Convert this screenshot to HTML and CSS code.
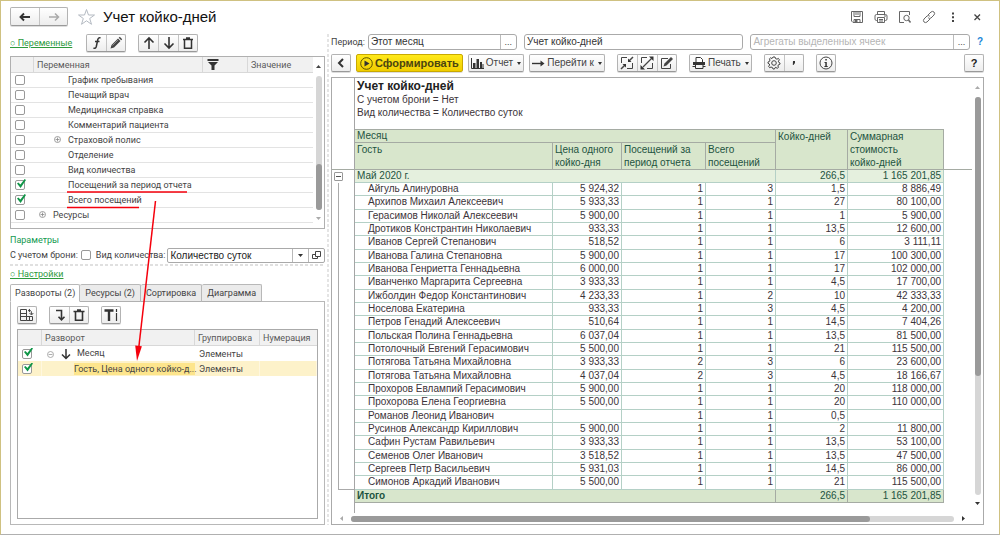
FILE: index.html
```html
<!DOCTYPE html>
<html lang="ru">
<head>
<meta charset="utf-8">
<title>Учет койко-дней</title>
<link rel="stylesheet" href="styles.css">
</head>
<body>
<div class="window">
<header class="titlebar">
  <div class="group nav">
    <button type="button" aria-label="Назад"><svg width="12" height="10" viewBox="0 0 12 10"><path d="M11 5H2M5 1.500L1.500 5L5 8.500" fill="none" stroke="#333" stroke-width="1.900"/></svg></button>
    <button type="button" aria-label="Вперед"><svg width="12" height="10" viewBox="0 0 12 10"><path d="M1 5H10M7 1.500L10.500 5L7 8.500" fill="none" stroke="#aaa" stroke-width="1.500"/></svg></button>
  </div>
  <svg class="star" width="19" height="18" viewBox="0 0 19 18"><path d="M9.500 1.500L11.500 7H17.500L12.700 10.500L14.500 16.300L9.500 12.800L4.500 16.300L6.300 10.500L1.500 7H7.500Z" fill="#fff" stroke="#b4bac2"/></svg>
  <h1>Учет койко-дней</h1>
  <div class="wintools">
    <button type="button" aria-label="Сохранить"><svg width="14" height="14" viewBox="0 0 14 14" fill="none" stroke="#666"><path d="M1.500 1.500H12.500V12.500H3L1.500 11ZM4 1.500V6.500H10V1.500M6 2V5M8 2V5M4 12.500V9.500H10V12.500"/><path d="M5 11H7.500" stroke-width="2"/></svg></button>
    <button type="button" aria-label="Печать"><svg width="14" height="14" viewBox="0 0 14 14" fill="none" stroke="#666"><path d="M3.500 4V1.500H10.500V4M3.500 10.500H2.500Q1 10.500 1 9V6Q1 4.500 2.500 4.500H11.500Q13 4.500 13 6V9Q13 10.500 11.500 10.500H10.500M3.500 7.500H10.500V12.500H3.500ZM5 9.500H9M5 11H9M10 6H12"/></svg></button>
    <button type="button" aria-label="Просмотр"><svg width="14" height="14" viewBox="0 0 14 14" fill="none" stroke="#666"><path d="M6 12.500H1.500V1.500H11.500V5"/><circle cx="8.500" cy="8" r="2.700"/><path d="M10.500 10L12.500 12.500" stroke-width="1.500"/></svg></button>
    <button type="button" aria-label="Ссылка"><svg width="14" height="14" viewBox="0 0 14 14" fill="none" stroke="#666"><path d="M6 5L9 2Q10.500 .800 12 2Q13.300 3.500 12 5L9 8Q7.500 9 6.200 7.800M8 9L5 12Q3.500 13.200 2 12Q.800 10.500 2 9L5 6Q6.500 5 7.800 6.200"/></svg></button>
    <button type="button" aria-label="Еще"><svg width="14" height="14" viewBox="0 0 14 14" fill="#444"><path d="M6 2.500H8V4.500H6ZM6 6.200H8V8.200H6ZM6 10H8V12H6Z"/></svg></button>
    <button type="button" aria-label="Закрыть"><svg width="14" height="14" viewBox="0 0 14 14"><path d="M4.500 4.500L10 10M10 4.500L4.500 10" stroke="#444" stroke-width="1.300"/></svg></button>
  </div>
</header>
<div class="panes">
<aside class="left">
  <div class="varbar">
    <a class="section" href="#vars">○ Переменные</a>
    <div class="group">
      <button type="button" aria-label="Формула"><svg width="14" height="14" viewBox="0 0 14 14" fill="none" stroke="#333" stroke-width="1.500"><path d="M10.500 2Q8.300 1 7.700 4L6.300 10.500Q5.700 13 3.500 12M5 5.500H9.500"/></svg></button>
      <button type="button" aria-label="Изменить"><svg width="14" height="14" viewBox="0 0 14 14"><path d="M1.500 12.500L2.500 9L9 2.500L11.500 5L5 11.500Z M9.700 1.800L10.800 .800L13.200 3.200L12.200 4.300Z" fill="#444"/><path d="M3.500 9.500L9 4" stroke="#aaa" stroke-width=".7"/></svg></button>
    </div>
    <div class="group">
      <button type="button" aria-label="Вверх"><svg width="14" height="14" viewBox="0 0 14 14" fill="none" stroke="#333" stroke-width="1.600"><path d="M7 13V2M2.500 6.500L7 2L11.500 6.500"/></svg></button>
      <button type="button" aria-label="Вниз"><svg width="14" height="14" viewBox="0 0 14 14" fill="none" stroke="#333" stroke-width="1.600"><path d="M7 1V12M2.500 7.500L7 12L11.500 7.500"/></svg></button>
      <button type="button" aria-label="Удалить"><svg width="14" height="14" viewBox="0 0 14 14" fill="none" stroke="#333" stroke-width="1.500"><path d="M2 3.500H12M5 2H9M3.500 4V12.200H10.500V4"/></svg></button>
    </div>
  </div>
  <div class="varlist" id="vars">
    <table class="tree">
      <colgroup><col class="c-check"><col><col class="c-filter"><col class="c-value"></colgroup>
      <thead><tr><th></th><th>Переменная</th><th><svg class="funnel" width="12" height="11" viewBox="0 0 12 11"><path d="M.500 0H11.500V2H.500ZM1 3H11L7.500 6.500V11H4.500V6.500Z" fill="#333"/></svg></th><th>Значение</th></tr></thead>
      <tbody>
      <tr><td><input type="checkbox" id="v1"></td><td class="deep" colspan="3"><label for="v1">График пребывания</label></td></tr>
      <tr><td><input type="checkbox" id="v2"></td><td class="deep" colspan="3"><label for="v2">Печащий врач</label></td></tr>
      <tr><td><input type="checkbox" id="v3"></td><td class="deep" colspan="3"><label for="v3">Медицинская справка</label></td></tr>
      <tr><td><input type="checkbox" id="v4"></td><td class="deep" colspan="3"><label for="v4">Комментарий пациента</label></td></tr>
      <tr><td><input type="checkbox" id="v5"></td><td class="branch2" colspan="3"><svg width="7" height="7" viewBox="0 0 7 7" fill="none" stroke="#888" stroke-width=".8"><circle cx="3.500" cy="3.500" r="3"/><path d="M1.500 3.500H5.500M3.500 1.500V5.500"/></svg><label for="v5">Страховой полис</label></td></tr>
      <tr><td><input type="checkbox" id="v6"></td><td class="deep" colspan="3"><label for="v6">Отделение</label></td></tr>
      <tr><td><input type="checkbox" id="v7"></td><td class="deep" colspan="3"><label for="v7">Вид количества</label></td></tr>
      <tr><td><input type="checkbox" id="v8" checked></td><td class="deep" colspan="3"><label for="v8">Посещений за период отчета</label></td></tr>
      <tr><td><input type="checkbox" id="v9" checked></td><td class="deep" colspan="3"><label for="v9">Всего посещений</label></td></tr>
      <tr><td><input type="checkbox" id="v10"></td><td class="branch1" colspan="3"><svg width="7" height="7" viewBox="0 0 7 7" fill="none" stroke="#888" stroke-width=".8"><circle cx="3.500" cy="3.500" r="3"/><path d="M1.500 3.500H5.500M3.500 1.500V5.500"/></svg><label for="v10">Ресурсы</label></td></tr>
      </tbody>
    </table>
    <div class="vscroll">
      <svg class="up" width="5" height="3" viewBox="0 0 5 3"><path d="M0 3L2.500 0L5 3Z" fill="#444"/></svg>
      <div class="track"><div class="thumb"></div></div>
      <svg width="5" height="3" viewBox="0 0 5 3"><path d="M0 0L2.500 3L5 0Z" fill="#aaa"/></svg>
    </div>
  </div>
  <h2>Параметры</h2>
  <div class="params">
    <label for="bron">С учетом брони:</label><input type="checkbox" id="bron">
    <label class="kindlabel" for="kind">Вид количества:</label>
    <div class="combo">
      <select id="kind"><option>Количество суток</option></select>
      <span class="drop"><svg width="5" height="3" viewBox="0 0 5 3"><path d="M0 0L2.500 3L5 0Z" fill="#333"/></svg></span>
      <button type="button" aria-label="Открыть"><svg width="9" height="9" viewBox="0 0 9 9" fill="none" stroke="#444"><path d="M3.500 .500H8.500V5.500H3.500ZM3 3.500H.500V7.500H5.500V6"/></svg></button>
    </div>
  </div>
  <div class="dash"></div>
  <a class="section settings" href="#setup">○ Настройки</a>
  <div class="tabs" role="tablist">
    <button type="button" role="tab" class="tab on">Развороты (2)</button><button type="button" role="tab" class="tab">Ресурсы (2)</button><button type="button" role="tab" class="tab">Сортировка</button><button type="button" role="tab" class="tab">Диаграмма</button>
  </div>
  <div class="tabpanel" id="setup">
    <div class="setbar">
      <div class="group"><button type="button" aria-label="Таблица"><svg width="14" height="14" viewBox="0 0 14 14" fill="none" stroke="#444"><path d="M.500 1.500H6.500V12.500H.500ZM.500 5.500H6.500M.500 8.500H12.500V12.500H6.500M9.500 8.500V12.500M8.500 2.500H10.500Q11.500 2.500 11.500 6.500M9.500 5L11.500 7L13.300 5M10 1L8.300 2.500L10 4"/></svg></button></div>
      <div class="group"><button type="button" aria-label="Вложить"><svg width="14" height="14" viewBox="0 0 14 14" fill="none" stroke="#333" stroke-width="1.600"><path d="M3 2.500H8.500V11.500M5.500 8.800L8.500 11.800L11.500 8.800"/></svg></button><button type="button" aria-label="Удалить"><svg width="14" height="14" viewBox="0 0 14 14" fill="none" stroke="#333" stroke-width="1.600"><path d="M1.500 3.500H12.500M5 2H9M3.500 4V12.200H10.500V4"/></svg></button></div>
      <div class="group"><button type="button" aria-label="Заголовок"><svg width="14" height="14" viewBox="0 0 14 14" fill="none" stroke="#333"><path d="M.500 2.500H9.500M5 2.500V13" stroke-width="2.400"/><path d="M12.500 1V4M12.500 5V13" stroke-width="1.200"/></svg></button></div>
    </div>
    <div class="setlist">
    <table class="tree">
      <colgroup><col class="c-check"><col><col class="c-kind"><col class="c-num"></colgroup>
      <thead><tr><th></th><th>Разворот</th><th>Группировка</th><th>Нумерация</th></tr></thead>
      <tbody>
      <tr><td><input type="checkbox" checked aria-label="Месяц"></td><td class="month"><svg class="ring" width="7" height="7" viewBox="0 0 7 7" fill="none" stroke="#999" stroke-width=".8"><circle cx="3.500" cy="3.500" r="3"/><path d="M1.500 3.500H5.500"/></svg><svg class="down" width="10" height="11" viewBox="0 0 10 11" fill="none" stroke="#333" stroke-width="1.500"><path d="M5 0V9.500M1 5.500L5 9.500L9 5.500"/></svg>Месяц</td><td>Элементы</td><td></td></tr>
      <tr class="picked"><td><input type="checkbox" checked aria-label="Гость"></td><td class="guest"><div>Гость, Цена одного койко-д...</div></td><td>Элементы</td><td></td></tr>
      </tbody>
    </table>
    </div>
  </div>
</aside>
<div class="splitter"></div>
<main class="right">
  <div class="fields">
    <label for="period">Период:</label>
    <div class="field period"><input id="period" type="text" value="Этот месяц"><button type="button">...</button></div>
    <div class="field"><input type="text" value="Учет койко-дней" aria-label="Вариант отчета"></div>
    <div class="field"><input type="text" placeholder="Агрегаты выделенных ячеек" aria-label="Агрегаты"><button type="button">...</button></div>
    <a class="hint" href="#help">?</a>
  </div>
  <div class="toolbar">
    <div class="group"><button type="button" aria-label="Свернуть"><svg width="8" height="10" viewBox="0 0 8 10"><path d="M6 1L2 5L6 9" fill="none" stroke="#333" stroke-width="2"/></svg></button></div>
    <button type="button" class="run"><svg width="13" height="13" viewBox="0 0 13 13"><circle cx="6.500" cy="6.500" r="5.800" fill="none" stroke="#5b5000"/><path d="M4.500 3.500L9.500 6.500L4.500 9.500Z" fill="#333"/></svg>Сформировать</button>
    <button type="button" class="btn report-btn"><svg width="13" height="11" viewBox="0 0 13 11"><path d="M.500 0V10.500H13" stroke="#333" fill="none"/><path d="M2 5H4.500V10H2ZM5.500 1H8V10H5.500ZM9 4H11V10H9ZM11.500 6H12.500V10H11.500Z" fill="#333"/></svg>Отчет<i class="caret"></i></button>
    <button type="button" class="btn goto"><svg width="13" height="7" viewBox="0 0 13 7"><path d="M0 3.500H10" stroke="#333" stroke-width="1.400"/><path d="M8.500 .500L12.500 3.500L8.500 6.500Z" fill="#333"/></svg>Перейти к<i class="caret"></i></button>
    <div class="group sizes">
      <button type="button" aria-label="Свернуть группы"><svg width="14" height="14" viewBox="0 0 14 14" fill="none" stroke="#444"><path d="M7 1.500H1.500V7M12.500 7V12.500H7"/><path d="M13 1L9 5M1 13L5 9" stroke-width="1.500"/><path d="M8 2.500V6H11.500ZM6 11.500V8H2.500Z" fill="#333" stroke="none"/></svg></button>
      <button type="button" aria-label="Развернуть группы"><svg width="14" height="14" viewBox="0 0 14 14" fill="none" stroke="#444"><path d="M7 1.500H1.500V7M12.500 7V12.500H7"/><path d="M3 11L11.500 2.500" stroke-width="1.300"/><path d="M9 .500H13.500V5ZM.500 9V13.500H5Z" fill="#333" stroke="none"/></svg></button>
      <button type="button" aria-label="Править"><svg width="14" height="14" viewBox="0 0 14 14" fill="none" stroke="#444"><path d="M8 2.500H1.500V12.500H10.500V8"/><path d="M3.500 10.500L4.500 7.500L11 1L13 3L6.500 9.500Z" fill="#444" stroke="none"/></svg></button>
    </div>
    <button type="button" class="btn print"><svg width="14" height="13" viewBox="0 0 14 13"><path d="M4 5V.500H8.500L10.500 2.500V5" fill="#fff" stroke="#333"/><path d="M1 5H13V8H1Z" fill="#333"/><path d="M3.500 8V11.500H11V8M.500 9.500H3.500M11 9.500H13.500" fill="none" stroke="#333"/></svg>Печать<i class="caret"></i></button>
    <div class="group gears">
      <button type="button" aria-label="Настройки"><svg width="14" height="14" viewBox="0 0 14 14" fill="none" stroke="#444"><circle cx="7" cy="7" r="2.300"/><path d="M6 1H8L8.500 2.600L10 3.200L11.400 2.400L12.400 3.800L11.400 5.200L11.600 6.200L13 7V8.200L11.500 8.700L10.900 10L11.500 11.400L10.200 12.300L8.800 11.400L8 11.700L7.500 13H6L5.500 11.600L4 11L2.600 11.700L1.600 10.300L2.600 9L2.400 8L1 7.300V6L2.500 5.400L3 4L2.400 2.800L3.600 1.800L5 2.600Z"/></svg></button>
      <button type="button" aria-label="Прочее"><svg width="4" height="6" viewBox="0 0 4 6"><path d="M1 1H3V3L1.500 5H.800Z" fill="#333"/></svg></button>
    </div>
    <div class="group"><button type="button" aria-label="Сведения"><svg width="14" height="14" viewBox="0 0 14 14"><circle cx="7" cy="7" r="6" fill="none" stroke="#444"/><path d="M6.300 3H7.800V4.500H6.300ZM5.500 6H7.800V10H8.700V11H5.400V10H6.300V7H5.500Z" fill="#333"/></svg></button></div>
    <div class="group help"><button type="button">?</button></div>
  </div>
  <section class="sheet">
    <div class="sheetbody">
    <table class="report">
      <colgroup><col class="g"><col class="n"><col class="p"><col class="v"><col class="t"><col class="d"><col class="s"><col></colgroup>
      <thead>
      <tr><td class="gut"></td><td class="intro" colspan="6"><strong>Учет койко-дней</strong><p>С учетом брони = Нет</p><p>Вид количества = Количество суток</p></td><td></td></tr>
      <tr class="h1"><td class="gut"></td><th colspan="4">Месяц</th><th rowspan="2">Койко-дней</th><th rowspan="2">Суммарная<br>стоимость<br>койко-дней</th><td></td></tr>
      <tr class="h2"><td class="gut"></td><th>Гость</th><th>Цена одного<br>койко-дня</th><th>Посещений за<br>период отчета</th><th>Всего<br>посещений</th><td></td></tr>
      </thead>
      <tbody>
      <tr class="sum"><td class="gut"><button type="button" aria-label="Свернуть группу"></button></td><td colspan="4">Май 2020 г.</td><td>266,5</td><td>1 165 201,85</td></tr>
      <tr><td class="gut bracket" rowspan="23"></td><td>Айгуль Алинуровна</td><td>5 924,32</td><td>1</td><td>3</td><td>1,5</td><td>8 886,49</td></tr>
      <tr><td>Архипов Михаил Алексеевич</td><td>5 933,33</td><td>1</td><td>1</td><td>27</td><td>80 100,00</td></tr>
      <tr><td>Герасимов Николай Алексеевич</td><td>5 900,00</td><td>1</td><td>1</td><td>1</td><td>5 900,00</td></tr>
      <tr><td>Дротиков Констрантин Николаевич</td><td>933,33</td><td>1</td><td>1</td><td>13,5</td><td>12 600,00</td></tr>
      <tr><td>Иванов Сергей Степанович</td><td>518,52</td><td>1</td><td>1</td><td>6</td><td>3 111,11</td></tr>
      <tr><td>Иванова Галина Степановна</td><td>5 900,00</td><td>1</td><td>1</td><td>17</td><td>100 300,00</td></tr>
      <tr><td>Иванова Генриетта Геннадьевна</td><td>6 000,00</td><td>1</td><td>1</td><td>17</td><td>102 000,00</td></tr>
      <tr><td>Иванченко Маргарита Сергеевна</td><td>3 933,33</td><td>1</td><td>1</td><td>4,5</td><td>17 700,00</td></tr>
      <tr><td>Ижболдин Федор Константинович</td><td>4 233,33</td><td>1</td><td>2</td><td>10</td><td>42 333,33</td></tr>
      <tr><td>Носелова Екатерина</td><td>933,33</td><td>1</td><td>3</td><td>4,5</td><td>4 200,00</td></tr>
      <tr><td>Петров Генадий Алексеевич</td><td>510,64</td><td>1</td><td>1</td><td>14,5</td><td>7 404,26</td></tr>
      <tr><td>Польская Полина Геннадьевна</td><td>6 037,04</td><td>1</td><td>1</td><td>13,5</td><td>81 500,00</td></tr>
      <tr><td>Потолочный Евгений Герасимович</td><td>5 500,00</td><td>1</td><td>1</td><td>21</td><td>115 500,00</td></tr>
      <tr><td>Потягова Татьяна Михайловна</td><td>3 933,33</td><td>2</td><td>3</td><td>6</td><td>23 600,00</td></tr>
      <tr><td>Потягова Татьяна Михайловна</td><td>4 037,04</td><td>2</td><td>3</td><td>4,5</td><td>18 166,67</td></tr>
      <tr><td>Прохоров Евлампий Герасимович</td><td>5 900,00</td><td>1</td><td>1</td><td>20</td><td>118 000,00</td></tr>
      <tr><td>Прохорова Елена Георгиевна</td><td>5 500,00</td><td>1</td><td>1</td><td>20</td><td>110 000,00</td></tr>
      <tr><td>Романов Леонид Иванович</td><td></td><td>1</td><td>1</td><td>0,5</td><td></td></tr>
      <tr><td>Русинов Александр Кириллович</td><td>5 900,00</td><td>1</td><td>1</td><td>2</td><td>11 800,00</td></tr>
      <tr><td>Сафин Рустам Равильевич</td><td>3 933,33</td><td>1</td><td>1</td><td>13,5</td><td>53 100,00</td></tr>
      <tr><td>Семенов Олег Иванович</td><td>3 518,52</td><td>1</td><td>1</td><td>13,5</td><td>47 500,00</td></tr>
      <tr><td>Сергеев Петр Васильевич</td><td>5 931,03</td><td>1</td><td>1</td><td>14,5</td><td>86 000,00</td></tr>
      <tr><td>Симонов Аркадий Иванович</td><td>5 500,00</td><td>1</td><td>1</td><td>21</td><td>115 500,00</td></tr>
      </tbody>
      <tfoot>
      <tr class="total"><td class="gut"></td><th colspan="4">Итого</th><td>266,5</td><td>1 165 201,85</td></tr>
      <tr class="tail"><td class="gut"></td><td colspan="7"></td></tr>
      </tfoot>
    </table>
    <div class="vscroll main">
      <svg class="up" width="5" height="3" viewBox="0 0 5 3"><path d="M0 3L2.500 0L5 3Z" fill="#aaa"/></svg>
      <div class="track"><div class="thumb"></div></div>
      <svg width="5" height="3" viewBox="0 0 5 3"><path d="M0 0L2.500 3L5 0Z" fill="#333"/></svg>
    </div>
    </div>
    <div class="hscroll">
      <svg width="3" height="5" viewBox="0 0 3 5"><path d="M3 0L0 2.500L3 5Z" fill="#aaa"/></svg>
      <div class="track"><div class="thumb"></div></div>
      <svg width="3" height="5" viewBox="0 0 3 5"><path d="M0 0L3 2.500L0 5Z" fill="#333"/></svg>
    </div>
  </section>
</main>
</div>
<svg class="marks" width="200" height="380" viewBox="0 0 200 380"><path d="M67 192H187M67 207.500H139" stroke="#f5000c" stroke-width="1.600"/><path d="M155.500 201L138.500 350" stroke="#f5000c" stroke-width="1.500"/><path d="M135.200 345.500L141.900 346.300L137 361Z" fill="#f5000c"/></svg>
</div>
</body>
</html>
```
FILE: styles.css
```css
* { box-sizing: border-box; }
body { margin: 0; font: 9px/12px Roboto, "Liberation Sans", sans-serif; color: #444; background: #fff; }
button, input, select { font: inherit; color: inherit; margin: 0; padding: 0; border: 0; background: none; border-radius: 0; outline: 0; }
svg { display: block; flex: none; }
h1, h2, p { margin: 0; font-weight: 400; }
table { border-collapse: separate; border-spacing: 0; table-layout: fixed; width: 100%; }
td, th { padding: 0; font-weight: 400; text-align: left; }

.window { position: relative; display: flex; flex-direction: column; min-height: 100vh; border: 1px solid #cfc181; border-bottom-color: #b0b0b0; padding: 0 15px 9px 9px; }
.titlebar { display: flex; align-items: center; height: 33px; padding-bottom: 2px; }
.titlebar h1 { font: 15px/20px "Liberation Sans", sans-serif; color: #111; margin-left: 7px; }
.star { margin-left: 9px; }
.wintools { display: flex; gap: 10px; margin-left: auto; }
.wintools button { width: 14px; }

.group { display: flex; height: 18px; border: 1px solid #b3b3b3; border-bottom-color: #999; border-radius: 2px; background: linear-gradient(#fff, #ededed); box-shadow: 0 1px 0 #ddd; }
.group button { display: flex; align-items: center; justify-content: center; width: 20px; }
.group button + button { border-left: 1px solid #c4c4c4; }
.group button:first-child, .group button:last-child { width: 19px; }
.group button:first-child:last-child { width: 18px; }
.nav { height: 19px; }
.nav button:nth-child(n) { width: 28px; }

.panes { flex: 1; display: grid; grid-template-columns: 315px 6px minmax(0, 1fr); }
.left { display: flex; flex-direction: column; }
.splitter { width: 2px; justify-self: center; background: repeating-linear-gradient(#e4e4e4 0 3px, #fff 3px 5px); }

.varbar { display: flex; align-items: center; height: 18px; gap: 12px; }
.section { color: #2d9a3c; text-decoration: underline; white-space: nowrap; }
.varbar .section { width: 64px; }
.varlist { display: flex; height: 173px; margin-top: 4px; border: 1px solid #b0b0b0; }
.c-check { width: 23px; }
.c-filter { width: 45px; }
.c-value { width: 65px; }
.tree { align-self: flex-start; flex: 1; }
.tree th { height: 16px; padding-left: 3px; background: #f1f1f1; border-right: 1px solid #d8d8d8; border-bottom: 1px solid #d8d8d8; color: #5a5a5a; }
.tree th:last-child { border-right: 0; }
.tree td { height: 15px; white-space: nowrap; }
.varlist td { border-bottom: 1px solid #e3e3e3; }
.tree td:first-child { padding-left: 4px; }
.deep { padding-left: 34px; }
.branch1, .branch2 { padding-left: 5px; }
.branch2 { padding-left: 20px; }
.branch1 svg, .branch2 svg { display: inline-block; margin-right: 7px; }
.funnel { margin-left: 1px; }
input[type="checkbox"] { appearance: none; display: block; position: relative; width: 10px; height: 10px; border: 1px solid #999; border-radius: 2px; background: #fff; }
input[type="checkbox"]:checked::after { content: ""; position: absolute; left: 1px; top: -2px; width: 9px; height: 9px; background: #109648; clip-path: polygon(0 50%, 15% 38%, 38% 62%, 85% 0, 100% 10%, 40% 100%); }

.vscroll { display: flex; flex: none; flex-direction: column; align-items: center; width: 11px; padding: 8px 0; }
.vscroll .track { flex: 1; display: flex; align-items: flex-end; width: 6px; margin: 8px 0 7px; border-radius: 3px; background: #d6d6d6; }
.vscroll .thumb { width: 6px; height: 34%; border-radius: 3px; background: #9a9a9a; }

h2 { margin-top: 5px; font-size: 9px; line-height: 12px; color: #12994f; }
.params { display: flex; align-items: center; height: 16px; margin-top: 1px; }
.params > input { margin-left: 3px; }
.kindlabel { margin: 0 2px 0 5px; }
.combo { position: relative; flex: 1; display: flex; height: 15px; border: 1px solid #a9a9a9; border-radius: 2px; }
.combo select { appearance: none; flex: 1; padding-left: 2px; font: 10px/13px "Liberation Sans", sans-serif; color: #222; }
.combo button, .drop { display: flex; align-items: center; justify-content: center; width: 16px; border-left: 1px solid #b8b8b8; }
.drop { pointer-events: none; }
.dash { height: 2px; margin-top: 1px; background: repeating-linear-gradient(90deg, #e0e0e0 0 3px, #fff 3px 5px); }
.settings { align-self: flex-start; margin-top: 2px; }
.tabs { position: relative; z-index: 1; display: flex; margin: 4px 0 -1px; }
.tab { height: 18px; padding: 0 5px; border: 1px solid #b8b8b8; border-left: 0; border-bottom-color: #b0b0b0; border-radius: 2px 2px 0 0; background: #ebebeb; }
.tab.on { padding: 0 4px; border-left: 1px solid #b8b8b8; border-bottom-color: #fff; background: #fff; }
.tabpanel { flex: 1; display: flex; flex-direction: column; padding: 4px 6px 5px; border: 1px solid #b8b8b8; }
.setbar { display: flex; gap: 12px; }
.setlist { flex: 1; display: flex; margin-top: 5px; border: 1px solid #aaa; }
.c-kind { width: 65px; }
.c-num { width: 57px; }
.setlist .c-check { width: 24px; }
.month svg { display: inline-block; vertical-align: middle; }
.month { padding-left: 5px; }
.ring { margin-right: 7px; }
.down { margin-right: 6px; }
.setlist td:nth-child(3) { padding-left: 4px; }
.picked td { background: #fdf2ca; border-right: 1px solid #fff7df; }
.tree .guest { padding-left: 32px; border-right: 0; }
.guest div { background: #fde58c; }

.right { display: flex; flex-direction: column; min-width: 0; font-family: "Liberation Sans", sans-serif; }
.fields { display: flex; align-items: center; height: 16px; gap: 7px; }
.fields label { margin-right: -4px; font-family: Roboto, sans-serif; }
.field { flex: 1; display: flex; min-width: 0; height: 16px; border: 1px solid #aaa; border-radius: 3px; }
.field.period { flex: 0 0 149px; }
.field input { flex: 1; min-width: 0; padding-left: 2px; font-size: 10px; color: #333; }
.field input::placeholder { color: #b5b5b5; }
.field button { width: 16px; border-left: 1px solid #bbb; }
.hint { width: 7px; font-size: 10px; color: #1c86d8; font-weight: 700; text-decoration: none; }
.toolbar { display: flex; align-items: center; height: 18px; margin-top: 4px; gap: 5px; font-size: 10px; }
.btn, .run { display: flex; align-items: center; height: 18px; padding: 0 2px; gap: 2px; border: 1px solid #b3b3b3; border-bottom-color: #999; border-radius: 2px; background: linear-gradient(#fff, #ededed); white-space: nowrap; box-shadow: 0 1px 0 #ddd; }
.run { padding: 0 3px; border-color: #c9a900; background: linear-gradient(#ffe91a, #f0cd00); font-size: 11px; font-weight: 700; color: #4b4410; }
.caret { width: 0; border: 2px solid transparent; border-top: 3px solid #333; border-bottom: 0; margin-left: 2px; }
.sizes, .print, .gears, .gears + .group { margin-left: 7px; }
.help { margin-left: auto; font-weight: 700; font-size: 11px; color: #222; }

.sheet { flex: 1; display: flex; flex-direction: column; margin-top: 5px; border: 1px solid #aaa; }
.sheetbody { flex: 1; display: flex; }
.report { flex: 1; align-self: flex-start; font-size: 10px; line-height: 12px; color: #3c3439; }
.report .g { width: 23px; }
.report .n { width: 198px; }
.report .p { width: 69px; }
.report .v { width: 84px; }
.report .t { width: 70px; }
.report .d { width: 72px; }
.report .s { width: 96px; }
.report tr { height: 13px; }
.report tbody tr:nth-child(3n) { height: 14px; }
.report .tail { height: 10px; }
.report td, .report th { vertical-align: top; white-space: nowrap; }
.report .gut { border: 0; border-right: 1px solid #a5a5a5; background: #fff; padding: 0; }
.report .intro { height: 52px; padding: 1px 2px 0; border-bottom: 1px solid #a5aba3; line-height: 13px; }
.intro strong { display: block; font-size: 12px; line-height: 14px; color: #222; }
.report th { padding-left: 2px; background: #d8e6cc; color: #1d5340; border-right: 1px solid #a5aba3; border-bottom: 1px solid #a5aba3; }
.h2 { height: 26px; }
.h2 th, .h1 th[rowspan] { line-height: 13px; }
.report .h2 td { border-bottom: 1px solid #a5aba3; }
.report tbody td { border-right: 1px solid #b4d0c6; border-bottom: 1px solid #b4d0c6; padding-right: 2px; text-align: right; }
.report tbody td:first-child:not(.gut), .bracket + td { padding-left: 13px; text-align: left !important; }
.report tbody .sum td:not(.gut) { background: #e5f0de; color: #1d5340; }
.report tbody .sum td:nth-child(2) { padding-left: 2px; text-align: left; }
.report tbody td.gut { border-bottom: 0; border-right-color: #a5a5a5; padding: 0; }
.gut button { position: relative; display: block; width: 9px; height: 9px; margin: 2px 0 0 2px; border: 1px solid #999; border-radius: 1px; }
.gut button::after { content: ""; position: absolute; left: 1px; right: 1px; top: 3px; height: 1px; background: #555; }
.bracket { position: relative; }
.bracket::before { content: ""; position: absolute; inset: 0 0 0 6px; border-left: 1px solid #aaa; border-bottom: 1px solid #aaa; }
.total th { font-weight: 700; }
.total td:not(.gut) { background: #d8e6cc; color: #1d5340; text-align: right; padding-right: 2px; border-right: 1px solid #a5aba3; border-bottom: 1px solid #a5aba3; }
.vscroll.main .track { align-items: flex-start; }
.vscroll.main .thumb { height: 70%; }
.hscroll { display: flex; align-items: center; height: 11px; padding: 0 18px 0 8px; }
.hscroll .track { flex: 1; height: 6px; margin: 0 8px 0 8px; border-radius: 3px; background: #d6d6d6; }
.hscroll .thumb { width: 86%; height: 6px; border-radius: 3px; background: #9a9a9a; }
.marks { position: absolute; z-index: 2; left: -1px; top: -1px; pointer-events: none; }
```
